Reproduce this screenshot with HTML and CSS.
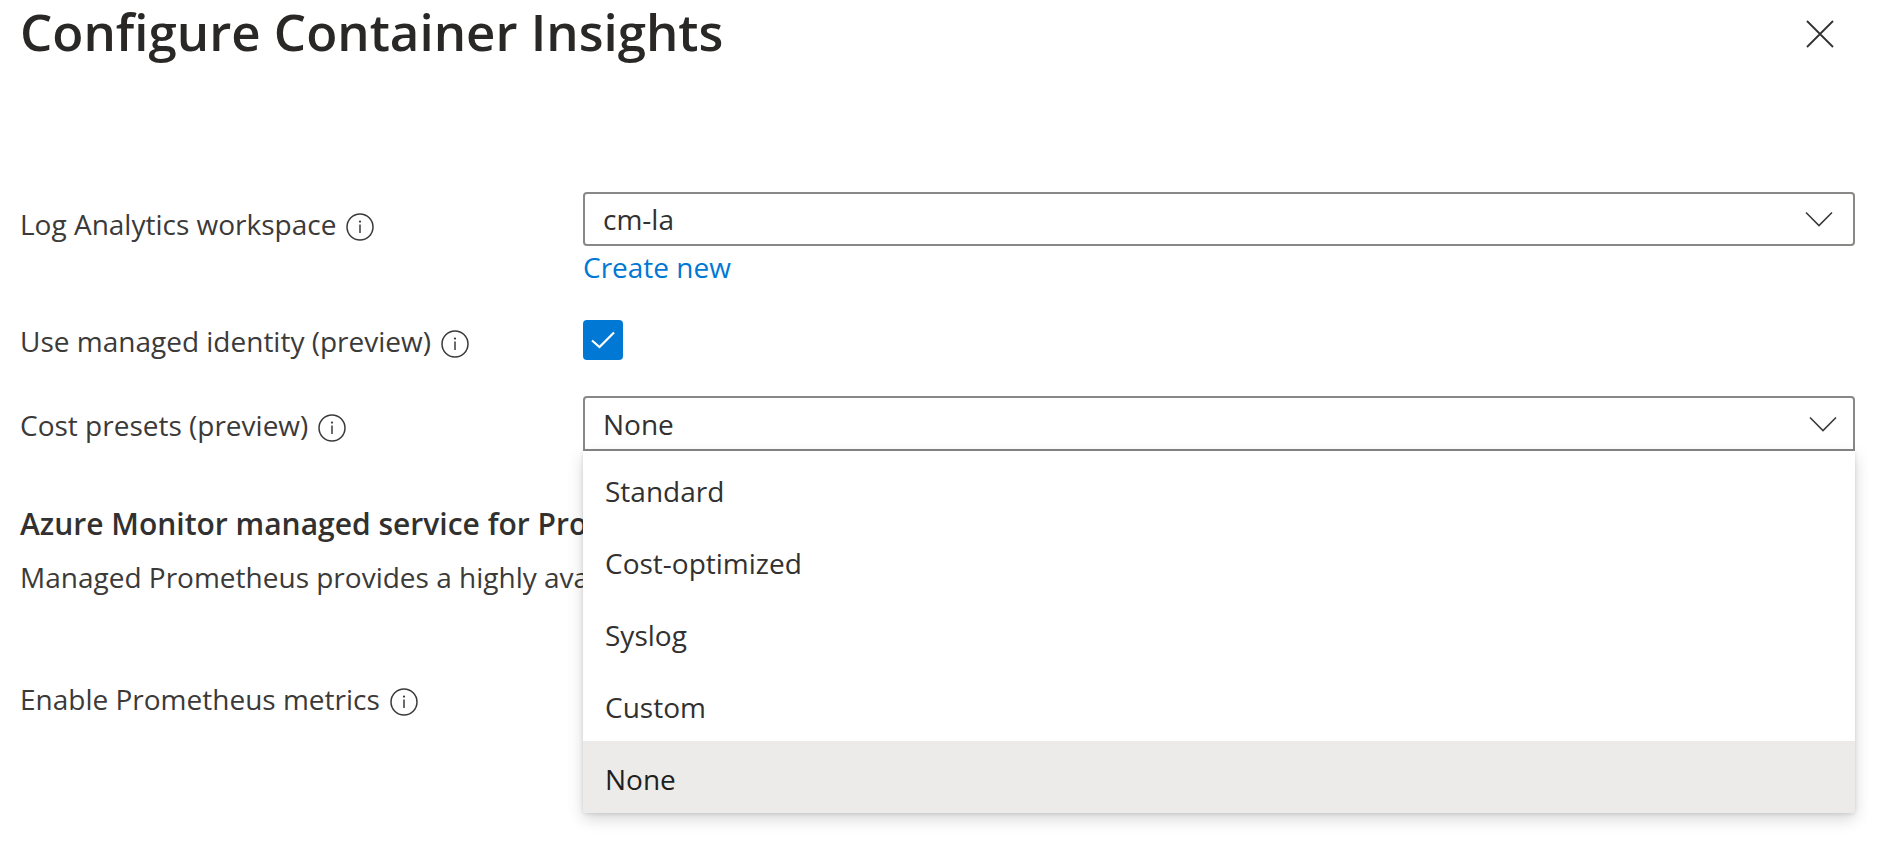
FILE: index.html
```html
<!DOCTYPE html>
<html lang="en">
<head>
<meta charset="utf-8">
<title>Configure Container Insights</title>
<link rel="stylesheet" href="styles.css">
</head>
<body>
<svg class="defs" aria-hidden="true">
  <symbol id="info" viewBox="0 0 28 28">
    <circle cx="14" cy="14" r="13" fill="none" stroke="currentColor" stroke-width="1.5"/>
    <path d="M14 11.5V20" stroke="currentColor" stroke-width="1.5"/>
    <circle cx="14" cy="8.6" r="1.1" fill="currentColor"/>
  </symbol>
  <symbol id="chevron" viewBox="0 0 28 16">
    <path d="M1 1.5L14 14.5L27 1.5" fill="none" stroke="currentColor" stroke-width="1.6"/>
  </symbol>
</svg>
<main class="panel">
  <header class="panel-header">
    <h1 class="title">Configure Container Insights</h1>
    <button class="close" type="button" aria-label="Close">
      <svg viewBox="0 0 28 28"><path d="M1 1L27 27M27 1L1 27" fill="none" stroke="currentColor" stroke-width="1.8"/></svg>
    </button>
  </header>
  <form class="form">
    <div class="row row-workspace">
      <div class="label-cell">
        <label for="workspace">Log Analytics workspace</label>
        <svg class="info"><use href="#info"/></svg>
      </div>
      <div class="control">
        <div class="select-box">
          <select id="workspace" class="select"><option>cm-la</option></select>
          <svg class="chevron"><use href="#chevron"/></svg>
        </div>
        <a class="link" href="#">Create new</a>
      </div>
    </div>
    <div class="row row-identity">
      <div class="label-cell">
        <label for="identity">Use managed identity (preview)</label>
        <svg class="info"><use href="#info"/></svg>
      </div>
      <div class="control check-box">
        <input id="identity" class="checkbox" type="checkbox" checked>
        <svg class="tick" viewBox="0 0 24 18"><path d="M1 9.5L8.5 16L23 1.5" fill="none" stroke="currentColor" stroke-width="2.2"/></svg>
      </div>
    </div>
    <div class="row row-presets">
      <div class="label-cell">
        <label for="presets">Cost presets (preview)</label>
        <svg class="info"><use href="#info"/></svg>
      </div>
      <div class="control">
        <div class="select-box">
          <select id="presets" class="select select-open"><option>None</option></select>
          <svg class="chevron chevron-open"><use href="#chevron"/></svg>
          <ul class="menu" role="listbox" aria-label="Cost presets">
            <li class="option" role="option">Standard</li>
            <li class="option" role="option">Cost-optimized</li>
            <li class="option" role="option">Syslog</li>
            <li class="option" role="option">Custom</li>
            <li class="option selected" role="option" aria-selected="true">None</li>
          </ul>
        </div>
      </div>
    </div>
    <section class="prometheus">
      <h2 class="subtitle">Azure Monitor managed service for Pro</h2>
      <p class="text">Managed Prometheus provides a highly ava</p>
      <div class="label-cell">
        <span>Enable Prometheus metrics</span>
        <svg class="info"><use href="#info"/></svg>
      </div>
    </section>
  </form>
</main>
</body>
</html>
```
FILE: styles.css
```css
* { box-sizing: border-box; }
body {
  margin: 0;
  background: #fff;
  color: #3b3a39;
  font: 28px/40px "Open Sans", "Noto Sans", sans-serif;
}
.defs { display: none; }
.panel { min-height: 100vh; padding: 0 23px 0 20px; }
.panel-header {
  display: flex;
  justify-content: space-between;
  align-items: flex-start;
  height: 192px;
}
.title {
  margin: 0;
  color: #292827;
  font-size: 51px;
  font-weight: 600;
  line-height: 62px;
}
.close {
  margin: 20px 21px 0 0;
  padding: 0;
  width: 28px;
  height: 28px;
  border: 0;
  background: none;
  color: #323130;
}
.close svg { display: block; width: 28px; height: 28px; }
.row { display: grid; grid-template-columns: 563px 1fr; }
.row-workspace { margin-bottom: 33px; }
.row-identity { margin-bottom: 35px; }
.row-workspace .label-cell { padding-top: 12px; }
.row-identity .label-cell { padding-top: 1px; }
.row-presets .label-cell { padding-top: 9px; }
.label-cell { display: flex; align-items: center; align-self: start; gap: 10px; white-space: nowrap; }
.info { width: 28px; height: 28px; margin-top: 5px; }
.select-box { position: relative; }
.select {
  display: block;
  width: 100%;
  height: 54px;
  padding: 0 18px;
  border: 2px solid #8a8886;
  border-radius: 4px;
  background: #fff;
  color: #323130;
  font: inherit;
  appearance: none;
}
.select-open { height: 55px; border-radius: 4px 4px 0 0; }
.chevron {
  position: absolute;
  top: 19px;
  right: 22px;
  width: 28px;
  height: 16px;
  pointer-events: none;
}
.chevron-open { top: 20px; right: 18px; }
.link { display: table; padding-top: 1px; color: #0078d4; text-decoration: none; }
.check-box { position: relative; height: 40px; }
.checkbox {
  display: block;
  margin: 0;
  width: 40px;
  height: 40px;
  border-radius: 4px;
  background: #0078d4;
  appearance: none;
}
.tick {
  position: absolute;
  top: 11px;
  left: 8px;
  width: 24px;
  height: 18px;
  color: #fff;
  pointer-events: none;
}
.menu {
  position: absolute;
  top: 100%;
  left: 0;
  right: 0;
  z-index: 1;
  margin: 0;
  padding: 2px 0 0;
  list-style: none;
  background: #fff;
  color: #323130;
  border-radius: 0 0 4px 4px;
  box-shadow: 0 6px 16px rgba(0, 0, 0, 0.16), 0 1px 4px rgba(0, 0, 0, 0.12);
}
.option { padding: 18px 22px 14px; }
.selected { background: #edebe9; color: #201f1e; border-radius: 0 0 4px 4px; }
.prometheus { padding-top: 53px; white-space: nowrap; }
.subtitle { margin: 0 0 13px; color: #323130; font-size: 30px; font-weight: 600; line-height: 40px; }
.text { margin: 0 0 82px; }
```
